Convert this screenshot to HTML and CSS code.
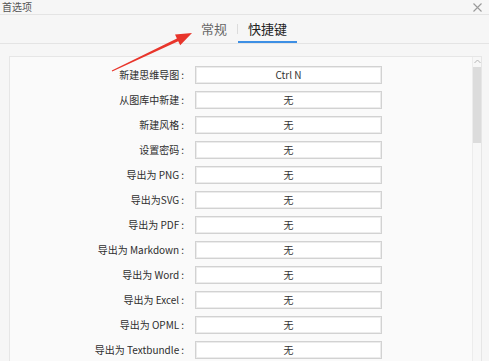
FILE: index.html
```html
<!DOCTYPE html>
<html lang="zh-CN">
<head>
    <meta charset="UTF-8">
    <meta name="viewport" content="width=device-width, initial-scale=1.0">
    <title>首选项</title>
    <link rel="stylesheet" href="styles.css">
</head>
<body>
    <div class="titlebar">
        <span class="title">首选项</span>
        <svg class="close" width="9" height="9" viewBox="0 0 9 9">
            <path d="M0.5 0.5 L8.5 8.5 M8.5 0.5 L0.5 8.5" stroke="#9a9a9a" stroke-width="1.1" fill="none"/>
        </svg>
    </div>

    <div class="tabs">
        <div class="tab">常规</div>
        <div class="tab-sep"></div>
        <div class="tab active">快捷键</div>
    </div>

    <div class="panel">
        <div class="list">
            <div class="row"><label>新建思维导图<i>:</i></label><div class="key">Ctrl N</div></div>
            <div class="row"><label>从图库中新建<i>:</i></label><div class="key">无</div></div>
            <div class="row"><label>新建风格<i>:</i></label><div class="key">无</div></div>
            <div class="row"><label>设置密码<i>:</i></label><div class="key">无</div></div>
            <div class="row"><label>导出为 PNG<i>:</i></label><div class="key">无</div></div>
            <div class="row"><label>导出为SVG<i>:</i></label><div class="key">无</div></div>
            <div class="row"><label>导出为 PDF<i>:</i></label><div class="key">无</div></div>
            <div class="row"><label>导出为 Markdown<i>:</i></label><div class="key">无</div></div>
            <div class="row"><label>导出为 Word<i>:</i></label><div class="key">无</div></div>
            <div class="row"><label>导出为 Excel<i>:</i></label><div class="key">无</div></div>
            <div class="row"><label>导出为 OPML<i>:</i></label><div class="key">无</div></div>
            <div class="row"><label>导出为 Textbundle<i>:</i></label><div class="key">无</div></div>
        </div>
        <div class="scrollbar">
            <svg class="scroll-up" width="7" height="5" viewBox="0 0 7 5">
                <path d="M0.5 4 L3.5 1 L6.5 4" stroke="#b5b5b5" stroke-width="1" fill="none"/>
            </svg>
            <div class="thumb"></div>
        </div>
    </div>

    <!-- annotation arrow over the dialog -->
    <svg class="arrow" width="489" height="361" viewBox="0 0 489 361">
        <polygon points="111.8,70.6 176.9,38.5 175,34.5 192,33 180.2,45.3 178.2,41.3 112.2,71.4" fill="#e8352b"/>
    </svg>
</body>
</html>
```

FILE: styles.css
```css
body {
    margin: 0;
    background-color: #f6f6f6;
    font-family: "Noto Sans CJK SC", "Open Sans", sans-serif;
    color: #333;
    overflow: hidden;
    height: 361px;
    position: relative;
}
.titlebar {
    height: 14px;
    border-bottom: 1px solid #e4e4e4;
    display: flex;
    justify-content: space-between;
    align-items: center;
    padding: 0 7px 0 2px;
}
.title {
    font-size: 10px;
    line-height: 14px;
    color: #555;
}
.close {
    margin-top: 1px;
}
.tabs {
    height: 28px;
    border-bottom: 1px solid #e4e4e4;
    display: flex;
    align-items: stretch;
    padding-left: 189px;
}
.tab {
    font-size: 13px;
    line-height: 28px;
    color: #666;
    padding: 0 10px 0 12px;
}
.tab.active {
    color: #222;
    padding: 0 10px;
    box-shadow: inset 0 -2px 0 #3d8fe4;
}
.tab-sep {
    width: 1px;
    margin: 9px 0 9px 0;
    background-color: #dcdcdc;
}
.panel {
    margin: 12px 7px 0 9px;
    height: 320px;
    border: 1px solid #e6e6e6;
    background-color: #fafafa;
    display: flex;
}
.list {
    flex: 1;
    padding-top: 5px;
}
.row {
    height: 25px;
    display: flex;
    align-items: center;
}
.row label {
    width: 174px;
    text-align: right;
    font-size: 10px;
    color: #2e2e2e;
    margin-right: 11px;
}
.row label i {
    font-style: normal;
    margin-left: 2px;
}
.key {
    width: 185px;
    height: 16px;
    border: 1px solid #d2d2d2;
    box-shadow: inset 0 0 0 1px #ececec;
    background-color: #fff;
    font-size: 10px;
    line-height: 16px;
    text-align: center;
    color: #333;
}
.scrollbar {
    width: 8px;
    border-left: 1px solid #ececec;
    background-color: #f7f7f7;
    display: flex;
    flex-direction: column;
    align-items: center;
}
.scroll-up {
    margin-top: 2px;
}
.thumb {
    width: 8px;
    height: 76px;
    margin-top: 3px;
    background-color: #dcdcdc;
}
.arrow {
    position: absolute;
    top: 0;
    left: 0;
    pointer-events: none;
}
```
